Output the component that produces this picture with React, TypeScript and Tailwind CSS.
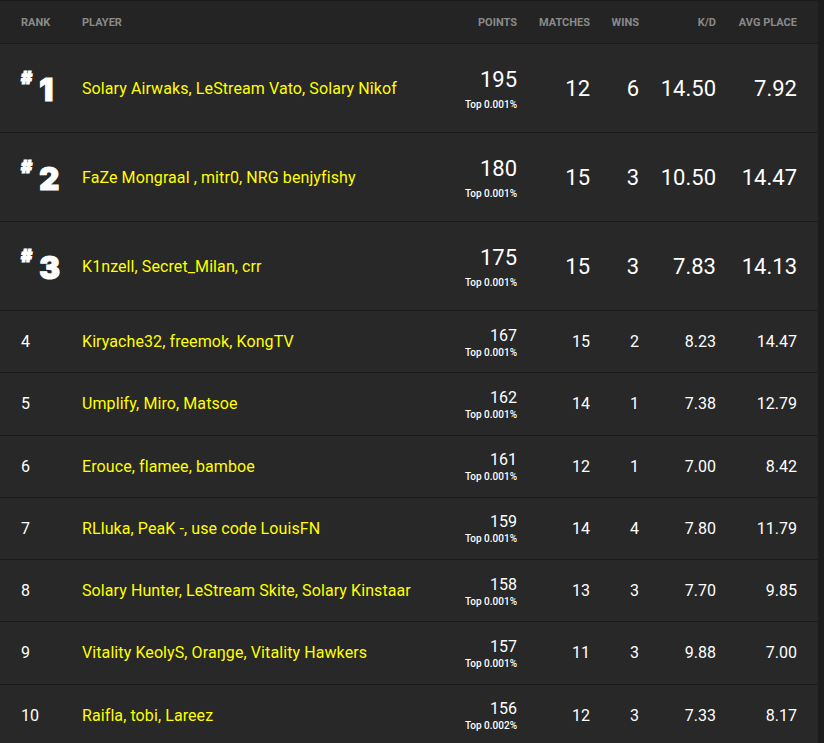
import React from "react";

type Row = {
  rank: number;
  players: string;
  points: number;
  top: string;
  matches: number;
  wins: number;
  kd: string;
  avg: string;
};

const rows: Row[] = [
  { rank: 1, players: "Solary Airwaks, LeStream Vato, Solary Nîkof", points: 195, top: "Top 0.001%", matches: 12, wins: 6, kd: "14.50", avg: "7.92" },
  { rank: 2, players: "FaZe Mongraal , mitr0, NRG benjyfishy", points: 180, top: "Top 0.001%", matches: 15, wins: 3, kd: "10.50", avg: "14.47" },
  { rank: 3, players: "K1nzell, Secret_Milan, crr", points: 175, top: "Top 0.001%", matches: 15, wins: 3, kd: "7.83", avg: "14.13" },
  { rank: 4, players: "Kiryache32, freemok, KongTV", points: 167, top: "Top 0.001%", matches: 15, wins: 2, kd: "8.23", avg: "14.47" },
  { rank: 5, players: "Umplify, Miro, Matsoe", points: 162, top: "Top 0.001%", matches: 14, wins: 1, kd: "7.38", avg: "12.79" },
  { rank: 6, players: "Erouce, flamee, bamboe", points: 161, top: "Top 0.001%", matches: 12, wins: 1, kd: "7.00", avg: "8.42" },
  { rank: 7, players: "RLluka, PeaK -, use code LouisFN", points: 159, top: "Top 0.001%", matches: 14, wins: 4, kd: "7.80", avg: "11.79" },
  { rank: 8, players: "Solary Hunter, LeStream Skite, Solary Kinstaar", points: 158, top: "Top 0.001%", matches: 13, wins: 3, kd: "7.70", avg: "9.85" },
  { rank: 9, players: "Vitality KeolyS, Oraŋge, Vitality Hawkers", points: 157, top: "Top 0.001%", matches: 11, wins: 3, kd: "9.88", avg: "7.00" },
  { rank: 10, players: "Raifla, tobi, Lareez", points: 156, top: "Top 0.002%", matches: 12, wins: 3, kd: "7.33", avg: "8.17" },
];

const grid = "grid grid-cols-[82px_358px_77px_73px_49px_77px_81px] pr-[21px] items-center";

export default function App() {
  return (
    <div
      className="min-h-[743px] w-[824px] bg-[#1c1c1c] overflow-hidden"
      style={{ fontFamily: "Roboto, 'Liberation Sans', sans-serif" }}
    >
      <div className="w-[818px] bg-[#282828]">
        <div
          className={`${grid} h-[44px] pt-[2px] border-t border-b border-[#1b1b1b] bg-[#242424] text-[11px] font-bold uppercase text-[#8a8a8a]`}
        >
          <div className="pl-[21px]">Rank</div>
          <div>Player</div>
          <div className="text-right">Points</div>
          <div className="text-right">Matches</div>
          <div className="text-right">Wins</div>
          <div className="text-right">K/D</div>
          <div className="text-right">Avg Place</div>
        </div>
        {rows.map((r) => {
          const big = r.rank <= 3;
          return (
            <div
              key={r.rank}
              className={`${grid} border-b border-[#1b1b1b] text-white pt-[1px] ${big ? "h-[89px]" : "h-[62.25px]"}`}
            >
              <div className="pl-[21px]">
                {big ? (
                  <div
                    className="flex items-start gap-[7px] text-white mt-[2px] [-webkit-text-stroke:1.2px_white]"
                    style={{ fontFamily: "Inter, 'DejaVu Sans', sans-serif" }}
                  >
                    <span className="text-[17px] font-black leading-none -mt-[4px]">#</span>
                    <span className="text-[31px] font-black leading-none">{r.rank}</span>
                  </div>
                ) : (
                  <span className="text-[16px]">{r.rank}</span>
                )}
              </div>
              <div className="text-[16px] tracking-[0.09px] text-[#ffff00] whitespace-nowrap">{r.players}</div>
              <div className="flex flex-col items-end">
                <span className={big ? "text-[22px] leading-[26px]" : "text-[16px] leading-[20px]"}>{r.points}</span>
                <span className={`text-[10px] font-medium leading-[12px] ${big ? "mt-[6px]" : "mt-[1px]"}`}>{r.top}</span>
              </div>
              <div className={`text-right ${big ? "text-[22px]" : "text-[16px]"}`}>{r.matches}</div>
              <div className={`text-right ${big ? "text-[22px]" : "text-[16px]"}`}>{r.wins}</div>
              <div className={`text-right ${big ? "text-[22px]" : "text-[16px]"}`}>{r.kd}</div>
              <div className={`text-right ${big ? "text-[22px]" : "text-[16px]"}`}>{r.avg}</div>
            </div>
          );
        })}
      </div>
    </div>
  );
}
